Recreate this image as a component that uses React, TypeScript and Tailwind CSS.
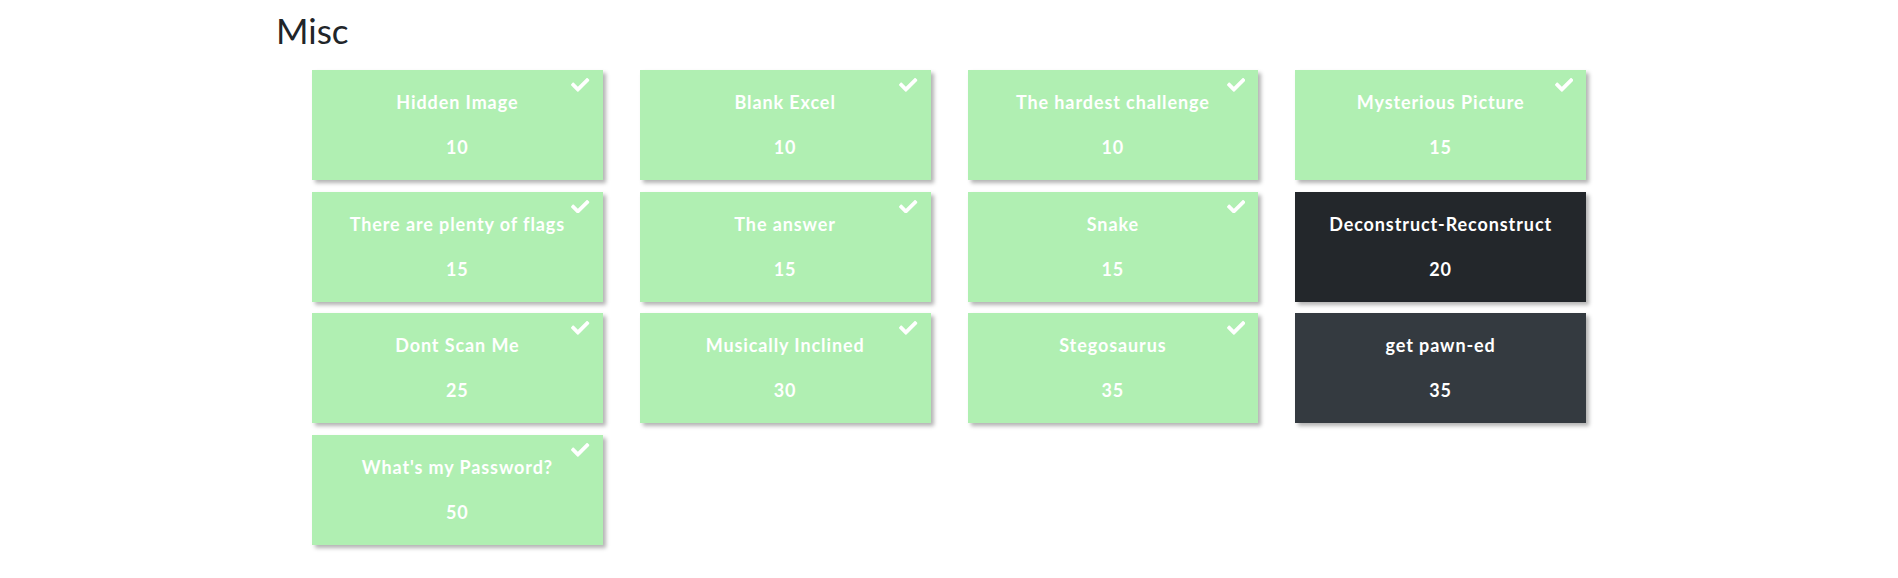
const challenges = [
  { name: "Hidden Image", value: 10, solved: true },
  { name: "Blank Excel", value: 10, solved: true },
  { name: "The hardest challenge", value: 10, solved: true },
  { name: "Mysterious Picture", value: 15, solved: true },
  { name: "There are plenty of flags", value: 15, solved: true },
  { name: "The answer", value: 15, solved: true },
  { name: "Snake", value: 15, solved: true },
  { name: "Deconstruct-Reconstruct", value: 20, solved: false, active: true },
  { name: "Dont Scan Me", value: 25, solved: true },
  { name: "Musically Inclined", value: 30, solved: true },
  { name: "Stegosaurus", value: 35, solved: true },
  { name: "get pawn-ed", value: 35, solved: false },
  { name: "What's my Password?", value: 50, solved: true },
];

function Check() {
  return (
    <svg
      className="absolute right-[13px] top-[8px]"
      width="18.3"
      height="13.7"
      viewBox="0 65 512 382"
      fill="#ffffff"
    >
      <path d="M173.898 439.404l-166.4-166.4c-9.997-9.997-9.997-26.206 0-36.204l36.203-36.204c9.997-9.998 26.207-9.998 36.204 0L192 312.69 432.095 72.596c9.997-9.997 26.207-9.997 36.204 0l36.203 36.204c9.997 9.997 9.997 26.206 0 36.204l-294.4 294.401c-9.998 9.997-26.207 9.997-36.204-.001z" />
    </svg>
  );
}

export default function App() {
  return (
    <div
      className="min-h-[578px] bg-white text-[#212529]"
      style={{ fontFamily: "Lato, 'Open Sans', sans-serif" }}
    >
      <div className="mx-auto w-[1350px] pt-[9px]">
        <h3 className="pl-[2px] text-[35px] leading-[42px] font-normal">Misc</h3>
        <div className="mt-[19px] px-[38px] grid grid-cols-4 gap-x-[37px] gap-y-[11.7px]">
          {challenges.map((c) => (
            <div
              key={c.name}
              className={
                "relative h-[110px] flex flex-col items-center pt-[19px] text-white font-bold text-[18px] leading-[27px] tracking-[0.9px] shadow-[3px_3px_4px_rgba(0,0,0,0.3)] " +
                (c.solved
                  ? "bg-[#b0efb2]"
                  : c.active
                  ? "bg-[#23272b]"
                  : "bg-[#343a40]")
              }
            >
              {c.solved && <Check />}
              <p>{c.name}</p>
              <span className="mt-[18px]">{c.value}</span>
            </div>
          ))}
        </div>
      </div>
    </div>
  );
}
